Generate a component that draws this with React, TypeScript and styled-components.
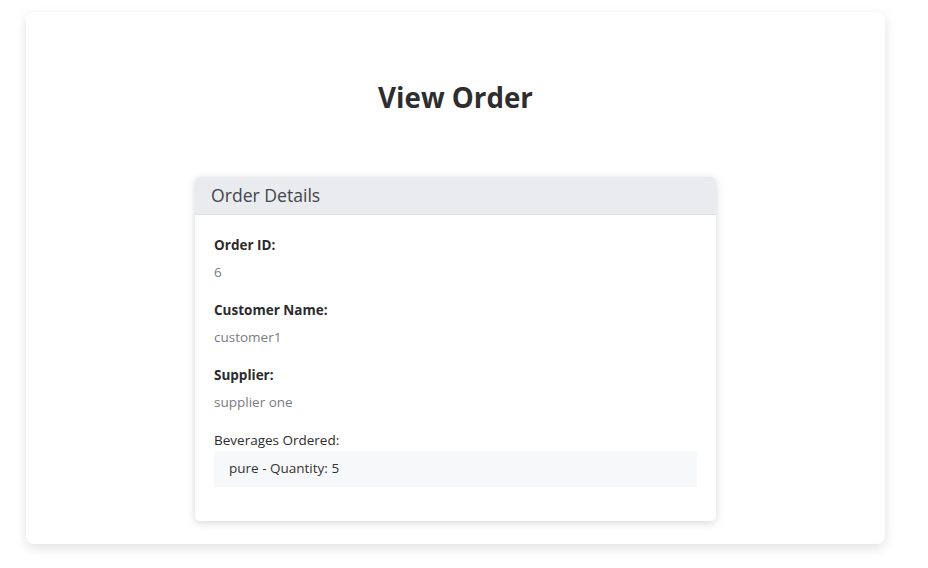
import React from "react";
import styled, { createGlobalStyle } from "styled-components";

const GlobalStyle = createGlobalStyle`
  html, body {
    margin: 0;
    padding: 0;
    background: #ffffff;
  }
  body {
    font-family: "Open Sans", "Noto Sans", "Liberation Sans", sans-serif;
    color: #333333;
  }
  * { box-sizing: border-box; }
`;

const Page = styled.div`
  padding: 12px 0 25px 26px;
`;

const Container = styled.div`
  width: 859px;
  background: #ffffff;
  border-radius: 8px;
  box-shadow: 0 4px 12px rgba(0, 0, 0, 0.12);
  padding: 68px 0 23px;
  display: flex;
  flex-direction: column;
  align-items: center;
`;

const Title = styled.h2`
  margin: 0;
  font-size: 27.7px;
  line-height: 34px;
  font-weight: 700;
  color: #2e2e2e;
`;

const Card = styled.div`
  margin-top: 63px;
  width: 521px;
  background: #ffffff;
  border-radius: 5px;
  box-shadow: 0 2px 8px rgba(0, 0, 0, 0.16);
  overflow: hidden;
`;

const CardHeader = styled.div`
  background: #e9ebef;
  border-bottom: 1px solid #dcdfe4;
  padding: 8px 16px;
  font-size: 17.6px;
  line-height: 21px;
  color: #424549;
`;

const CardBody = styled.div`
  padding: 20px 19px 34px;
`;

const Field = styled.div`
  margin-bottom: 17px;
`;

const Label = styled.div<{ $bold?: boolean }>`
  font-size: 13.5px;
  line-height: 21px;
  font-weight: ${(p) => (p.$bold ? 700 : 400)};
  color: #2b2b2b;
`;

const Value = styled.div`
  margin-top: 6px;
  font-size: 13.5px;
  line-height: 21px;
  color: #777c82;
`;

const List = styled.ul`
  list-style: none;
  margin: 0;
  padding: 0;
`;

const ListItem = styled.li`
  background: #f7f8fa;
  padding: 7px 15px 8px;
  font-size: 13.5px;
  line-height: 21px;
  color: #333333;
`;

const details = [
  { label: "Order ID:", value: "6" },
  { label: "Customer Name:", value: "customer1" },
  { label: "Supplier:", value: "supplier one" },
];

const beverages = [{ name: "pure", quantity: 5 }];

export default function App() {
  return (
    <>
      <GlobalStyle />
      <Page>
        <Container>
          <Title>View Order</Title>
          <Card>
            <CardHeader>Order Details</CardHeader>
            <CardBody>
              {details.map((d) => (
                <Field key={d.label}>
                  <Label $bold>{d.label}</Label>
                  <Value>{d.value}</Value>
                </Field>
              ))}
              <Label>Beverages Ordered:</Label>
              <List>
                {beverages.map((b) => (
                  <ListItem key={b.name}>
                    {b.name} - Quantity: {b.quantity}
                  </ListItem>
                ))}
              </List>
            </CardBody>
          </Card>
        </Container>
      </Page>
    </>
  );
}
